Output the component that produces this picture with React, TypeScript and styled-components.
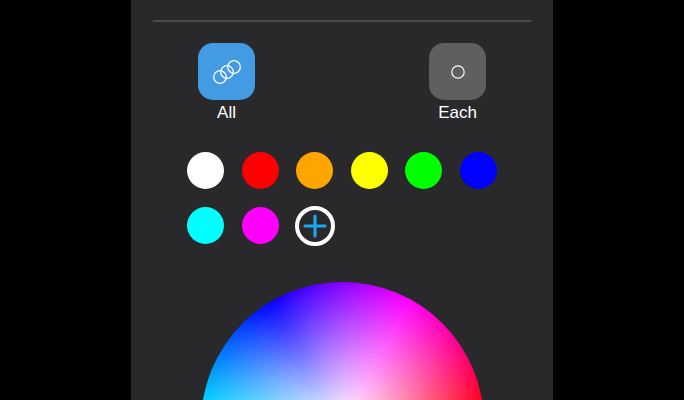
import styled, { createGlobalStyle } from "styled-components";

const SWATCHES = ["#ffffff", "#ff0000", "#ffa500", "#ffff00", "#00ff00", "#0000ff", "#00ffff", "#ff00ff"];

export default function App() {
  return (
    <Page>
      <GlobalStyle />
      <Panel>
        <Divider />

        <ModeRow>
          <Mode>
            <ModeTile $active>
              <svg width="30" height="26" viewBox="0 0 30 26" fill="none" stroke="#fff" strokeWidth="1.25">
                <circle cx="8" cy="18" r="6.3" />
                <circle cx="15" cy="13" r="6.3" />
                <circle cx="22" cy="8" r="6.3" />
              </svg>
            </ModeTile>
            <ModeLabel>All</ModeLabel>
          </Mode>

          <Mode>
            <ModeTile>
              <svg width="16" height="16" viewBox="0 0 16 16" fill="none" stroke="#fff" strokeWidth="1.2">
                <circle cx="8" cy="8" r="6.2" />
              </svg>
            </ModeTile>
            <ModeLabel>Each</ModeLabel>
          </Mode>
        </ModeRow>

        <SwatchGrid>
          {SWATCHES.map((color) => (
            <Swatch key={color} type="button" $color={color} aria-label={color} />
          ))}
          <AddButton type="button" aria-label="Add colour">
            <svg width="24" height="24" viewBox="0 0 24 24" stroke="#1ba6f0" strokeWidth="3.2" strokeLinecap="round">
              <path d="M12 2v20M2 12h20" />
            </svg>
          </AddButton>
        </SwatchGrid>

        <Wheel />
      </Panel>
    </Page>
  );
}

/* ===== layout ===== */

const GlobalStyle = createGlobalStyle`
  html, body {
    margin: 0;
    height: 100%;
    background: #000;
    overflow: hidden;
  }
`;

const Page = styled.div`
  height: 400px;
  display: flex;
  justify-content: center;
  overflow: hidden;
  font-family: "Liberation Sans", Arial, sans-serif;
`;

const Panel = styled.main`
  width: 422px;
  height: 400px;
  background: #29292c;
  display: flex;
  flex-direction: column;
  align-items: center;
  overflow: hidden;
`;

const Divider = styled.div`
  width: 378px;
  height: 2px;
  margin-top: 20px;
  background: #4b4b4f;
  flex: none;
`;

/* ===== all / each ===== */

const ModeRow = styled.section`
  width: 288px;
  margin-top: 21px;
  display: flex;
  justify-content: space-between;
  flex: none;
`;

const Mode = styled.div`
  width: 57px;
  display: flex;
  flex-direction: column;
  align-items: center;
  gap: 3px;
`;

const ModeTile = styled.div<{ $active?: boolean }>`
  width: 57px;
  height: 57px;
  border-radius: 15px;
  background: ${(p) => (p.$active ? "#439be3" : "#5f5f5f")};
  display: flex;
  align-items: center;
  justify-content: center;
`;

const ModeLabel = styled.div`
  font-size: 17px;
  line-height: 20px;
  color: #fff;
`;

/* ===== colours ===== */

const SwatchGrid = styled.section`
  width: 310px;
  margin-top: 29px;
  display: grid;
  grid-template-columns: repeat(6, 37px);
  justify-content: space-between;
  row-gap: 18px;
  flex: none;
`;

const Swatch = styled.button<{ $color: string }>`
  width: 37px;
  height: 37px;
  padding: 0;
  border: none;
  border-radius: 50%;
  background: ${(p) => p.$color};
`;

const AddButton = styled.button`
  width: 40px;
  height: 40px;
  margin: -1.5px;
  padding: 0;
  border: 4px solid #fff;
  border-radius: 50%;
  background: transparent;
  display: flex;
  align-items: center;
  justify-content: center;
`;

/* conic layer is blurred so the hue ridges melt like the real wheel */
const Wheel = styled.div`
  position: relative;
  width: 283px;
  height: 283px;
  margin-top: 38px;
  flex: none;
  border-radius: 50%;
  overflow: hidden;

  &::before {
    content: "";
    position: absolute;
    inset: -20px;
    background: conic-gradient(from -32deg, #0000ff, #ff00ff, #ff0000, #ffff00, #00ff00, #00ffff, #0000ff);
    filter: blur(8px);
  }

  &::after {
    content: "";
    position: absolute;
    inset: 0;
    background: radial-gradient(circle closest-side, #fff 0%, rgba(255, 255, 255, 0) 100%);
  }
`;
